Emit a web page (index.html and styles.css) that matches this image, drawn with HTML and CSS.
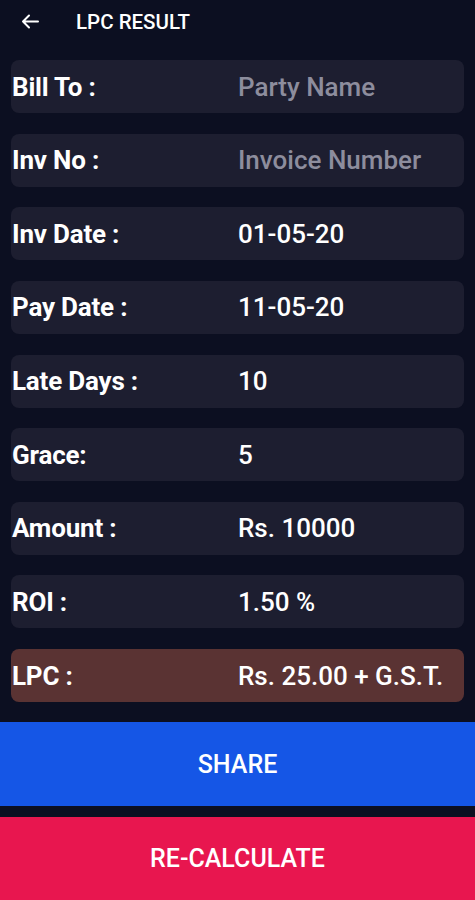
FILE: index.html
```html
<!DOCTYPE html>
<html>
<head>
<meta charset="utf-8">
<link rel="stylesheet" href="styles.css">
</head>
<body>
<div class="app">
  <header class="topbar">
    <svg class="back" width="18" height="15" viewBox="0 0 18 15"><path d="M17 7.5H2M8 1.5L2 7.5L8 13.5" fill="none" stroke="#fff" stroke-width="2" stroke-linecap="round" stroke-linejoin="round"/></svg>
    <span class="title">LPC RESULT</span>
  </header>
  <main class="rows">
    <div class="row"><span class="label">Bill To :</span><span class="value placeholder">Party Name</span></div>
    <div class="row"><span class="label">Inv No :</span><span class="value placeholder">Invoice Number</span></div>
    <div class="row"><span class="label">Inv Date :</span><span class="value">01-05-20</span></div>
    <div class="row"><span class="label">Pay Date :</span><span class="value">11-05-20</span></div>
    <div class="row"><span class="label">Late Days :</span><span class="value">10</span></div>
    <div class="row"><span class="label">Grace:</span><span class="value">5</span></div>
    <div class="row"><span class="label">Amount :</span><span class="value">Rs. 10000</span></div>
    <div class="row"><span class="label">ROI :</span><span class="value">1.50 %</span></div>
    <div class="row lpc"><span class="label">LPC :</span><span class="value">Rs. 25.00 + G.S.T.</span></div>
  </main>
  <div class="actions">
    <button class="btn share">SHARE</button>
    <button class="btn recalc">RE-CALCULATE</button>
  </div>
</div>
</body>
</html>
```
FILE: styles.css
```css
* { box-sizing: border-box; }
html, body { margin: 0; padding: 0; }
body {
  background: #0c0f21;
  font-family: Roboto, "Liberation Sans", sans-serif;
  color: #fff;
  width: 475px;
  height: 900px;
  overflow: hidden;
}
.app { display: flex; flex-direction: column; height: 900px; }
.topbar {
  height: 60px;
  display: flex;
  align-items: flex-start;
  padding-top: 14px;
}
.back { margin-left: 21px; }
.title {
  margin-left: 37px;
  font-size: 20.5px;
  font-weight: 500;
  line-height: 16px;
}
.rows {
  display: flex;
  flex-direction: column;
  gap: 20.625px;
  padding: 0 11px;
}
.row {
  height: 53px;
  background: #1d1e30;
  border-radius: 8px;
  display: flex;
  align-items: center;
}
.row.lpc { background: #5a3333; }
.label {
  width: 227px;
  font-size: 26px;
  font-weight: 700;
  padding-left: 1px;
  letter-spacing: -0.2px;
}
.value {
  font-size: 26px;
  font-weight: 500;
}
.placeholder { color: #8d8d9d; }
.actions {
  margin-top: 20px;
  display: flex;
  flex-direction: column;
  gap: 11px;
}
.btn {
  border: none;
  color: #fff;
  font-family: Roboto, "Liberation Sans", sans-serif;
  font-size: 25px;
  font-weight: 500;
  width: 100%;
}
.share { height: 84px; background: #1556e6; }
.recalc { height: 83px; background: #e8164f; }
```
